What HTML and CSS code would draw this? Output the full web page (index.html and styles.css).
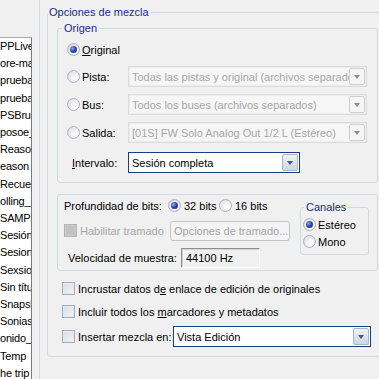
FILE: index.html
```html
<!DOCTYPE html>
<html lang="es">
<head>
    <meta charset="UTF-8">
    <title>Opciones de mezcla</title>
    <link rel="stylesheet" href="styles.css">
</head>
<body>
    <div class="app">
        <aside class="side">
            <ul class="files">
                <li>PPLiveV</li>
                <li>ore-ma</li>
                <li>prueba</li>
                <li>prueba</li>
                <li>PSBrus</li>
                <li>posoe_g</li>
                <li>Reason</li>
                <li>eason</li>
                <li>Recuerd</li>
                <li>olling_</li>
                <li>SAMPLI</li>
                <li>Sesión</li>
                <li>Sesion</li>
                <li>Sexsion</li>
                <li>Sin títu</li>
                <li>Snapsh</li>
                <li>Sonias</li>
                <li>onido_</li>
                <li>Temp</li>
                <li>he trip</li>
            </ul>
        </aside>

        <main class="main">
            <fieldset class="group outer">
                <legend>Opciones de mezcla</legend>

                <!-- Origen -->
                <fieldset class="group origin">
                    <legend>Origen</legend>
                    <div class="src-row first">
                        <span class="opt"><span class="radio on"></span><span><u>O</u>riginal</span></span>
                    </div>
                    <div class="src-row">
                        <span class="opt"><span class="radio"></span><span>Pista:</span></span>
                        <div class="combo off"><span class="val">Todas las pistas y original (archivos separados)</span><span class="btn"></span></div>
                    </div>
                    <div class="src-row">
                        <span class="opt"><span class="radio"></span><span>Bus:</span></span>
                        <div class="combo off"><span class="val">Todos los buses (archivos separados)</span><span class="btn"></span></div>
                    </div>
                    <div class="src-row">
                        <span class="opt"><span class="radio"></span><span>Salida:</span></span>
                        <div class="combo off"><span class="val">[01S] FW Solo Analog Out 1/2 L (Estéreo)</span><span class="btn"></span></div>
                    </div>
                    <div class="src-row interval">
                        <span class="opt"><span><u>I</u>ntervalo:</span></span>
                        <div class="combo short"><span class="val">Sesión completa</span><span class="btn"></span></div>
                    </div>
                </fieldset>

                <!-- Profundidad / canales -->
                <div class="group depth">
                    <div class="depth-main">
                        <div class="d-row">
                            <span class="d-label">Profundidad de bits:</span>
                            <span class="radio on"></span><span class="bits">32 bits</span>
                            <span class="radio"></span><span class="bits">16 bits</span>
                        </div>
                        <div class="d-row dither">
                            <span class="d-label"><span class="check off"></span><span>Habilitar tramado</span></span>
                            <span class="push off">Opciones de tramado...</span>
                        </div>
                        <div class="d-row rate">
                            <span class="d-label">Velocidad de muestra:</span>
                            <span class="field">44100 Hz</span>
                        </div>
                    </div>
                    <fieldset class="group channels">
                        <legend>Canales</legend>
                        <div class="ch-row"><span class="radio on"></span><span>Estéreo</span></div>
                        <div class="ch-row"><span class="radio"></span><span>Mono</span></div>
                    </fieldset>
                </div>

                <div class="check-row first"><span class="check"></span><span>Incrustar datos d<u>e</u> enlace de edición de originales</span></div>
                <div class="check-row"><span class="check"></span><span>Incluir todos los <u>m</u>arcadores y metadatos</span></div>
                <div class="check-row last">
                    <span class="ins-label"><span class="check"></span><span>Insertar mezcla en:</span></span>
                    <div class="combo wide"><span class="val">Vista Edición</span><span class="btn"></span></div>
                </div>
            </fieldset>
        </main>
    </div>
</body>
</html>
```

FILE: styles.css
```css
* {
    box-sizing: border-box;
}
body {
    margin: 0;
    background: #f0f0f0;
    color: #000;
    font-family: 'Liberation Sans', Arial, sans-serif;
    font-size: 11px;
    overflow: hidden;
}
.app {
    display: flex;
    width: 400px;
    height: 379px;
}

/* panel izquierdo */
.side {
    width: 40px;
    flex: none;
    padding-top: 37px;
    border-right: 1px solid #d3d9df;
}
.files {
    margin: 0;
    padding: 0;
    list-style: none;
    width: 32px;
    height: 100%;
    background: #fff;
    border-top: 1px solid #a9a9a9;
    border-right: 1px solid #7b7b7b;
    overflow: hidden;
}
.files li {
    line-height: 17.2px;
    white-space: nowrap;
    letter-spacing: -0.2px;
}

/* grupos */
.main {
    flex: 1;
    padding-left: 7px;
}
.group {
    margin: 0;
    min-width: 0;
    border: 1px solid #d0d8e0;
    border-radius: 3px;
}
legend {
    line-height: 13px;
    padding: 0 2px;
    color: #1b2c86;
}
.outer {
    width: 342px;
    margin-top: 6px;
    padding: 3px 10px 9px 9px;
}
.outer > legend {
    margin-left: -9px;
    padding: 0 1px;
}
.origin {
    padding: 4px 10px 9px 9px;
}
.origin > legend {
    margin-left: -5px;
}

/* filas de origen */
.src-row {
    display: grid;
    grid-template-columns: 61px 1fr;
    align-items: center;
    height: 21px;
    margin-bottom: 7px;
}
.src-row.first {
    margin-bottom: 6px;
}
.src-row.interval {
    margin: 9px 0 0;
}
.opt {
    display: flex;
    align-items: center;
    white-space: nowrap;
}
.interval .opt {
    padding-left: 5px;
}
u {
    text-decoration-thickness: 1px;
    text-underline-offset: 1px;
}

/* radio y casillas */
.radio {
    position: relative;
    width: 13px;
    height: 13px;
    flex: none;
    margin-right: 2px;
    border: 1px solid #a9b2bd;
    border-radius: 50%;
    background: radial-gradient(circle at 68% 68%, #fff 0, #f1f3f5 35%, #d3d8de 100%);
}
.radio.on::after {
    content: "";
    position: absolute;
    left: 2px;
    top: 2px;
    width: 7px;
    height: 7px;
    border-radius: 50%;
    background: radial-gradient(circle at 35% 35%, #9aa6ec 0, #3546b0 45%, #1a2678 100%);
}
.check {
    width: 13px;
    height: 13px;
    flex: none;
    margin-right: 3px;
    border: 1px solid #a4aebb;
    background: linear-gradient(135deg, #d3dbe5, #f5f7fa);
    box-shadow: inset 0 0 0 1px #e4e9ef;
}
.check.off {
    border-color: #b4b4b4;
    background: #c2c2c2;
    box-shadow: inset 0 0 0 1px #cbcbcb;
}

/* combos */
.combo {
    display: flex;
    align-items: center;
    height: 21px;
    padding: 1px;
    border: 1px solid #1c3d7a;
    background: #fff;
    overflow: hidden;
}
.combo .val {
    flex: 1;
    min-width: 0;
    padding-left: 2px;
    white-space: nowrap;
    overflow: hidden;
}
.combo .btn {
    display: flex;
    align-items: center;
    justify-content: center;
    width: 16px;
    height: 17px;
    flex: none;
    border: 1px solid #a7b6cb;
    border-radius: 2px;
    background: linear-gradient(#eef2f7, #cdd6e2);
}
.combo .btn::after {
    content: "";
    border-left: 3px solid transparent;
    border-right: 3px solid transparent;
    border-top: 4px solid #45587e;
}
.combo.off {
    border-color: #dcdcdc;
    background: #f6f6f6;
    box-shadow: inset 0 0 0 1px #ececec;
    color: #a6a6a6;
}
.combo.off .btn {
    border-color: #cfcfcf;
    background: #f5f5f5;
}
.combo.off .btn::after {
    border-top-color: #8d8d8d;
}
.combo.short {
    width: 172px;
}
.combo.wide {
    width: 198px;
}

/* profundidad */
.depth {
    display: flex;
    margin-top: 11px;
    padding: 0 8px 2px 6px;
}
.depth-main {
    flex: 1;
}
.d-row {
    display: flex;
    align-items: center;
    height: 21px;
}
.d-row.dither {
    margin-top: 4px;
}
.d-row.rate {
    margin-top: 6px;
}
.d-label {
    display: flex;
    align-items: center;
    width: 104px;
    flex: none;
    white-space: nowrap;
}
.dither .d-label {
    width: 106px;
    color: #a6a6a6;
}
.rate .d-label {
    width: 117px;
    padding-left: 4px;
}
.bits {
    width: 36px;
    padding-left: 1px;
}
.push {
    width: 120px;
    height: 20px;
    line-height: 18px;
    padding-left: 3px;
    border: 1px solid #c6c6c6;
    border-radius: 3px;
    background: #f4f4f4;
    white-space: nowrap;
    overflow: hidden;
}
.push.off {
    color: #a6a6a6;
}
.field {
    width: 79px;
    height: 20px;
    line-height: 18px;
    padding-left: 4px;
    border: 1px solid;
    border-color: #8e8e8e #fff #fff #8e8e8e;
    box-shadow: inset 1px 1px 0 #d6d6d6;
}
.channels {
    width: 69px;
    align-self: flex-start;
    margin-top: 6px;
    padding: 2px 2px 4px;
}
.channels > legend {
    margin-left: 1px;
}
.ch-row {
    display: flex;
    align-items: center;
    height: 17px;
}

/* casillas inferiores */
.check-row {
    display: flex;
    align-items: center;
    height: 21px;
    margin-top: 2px;
    padding-left: 5px;
    white-space: nowrap;
}
.check-row.first {
    margin-top: 7px;
}
.check-row.last {
    margin-top: 4px;
}
.ins-label {
    display: flex;
    align-items: center;
    width: 111px;
}
```
